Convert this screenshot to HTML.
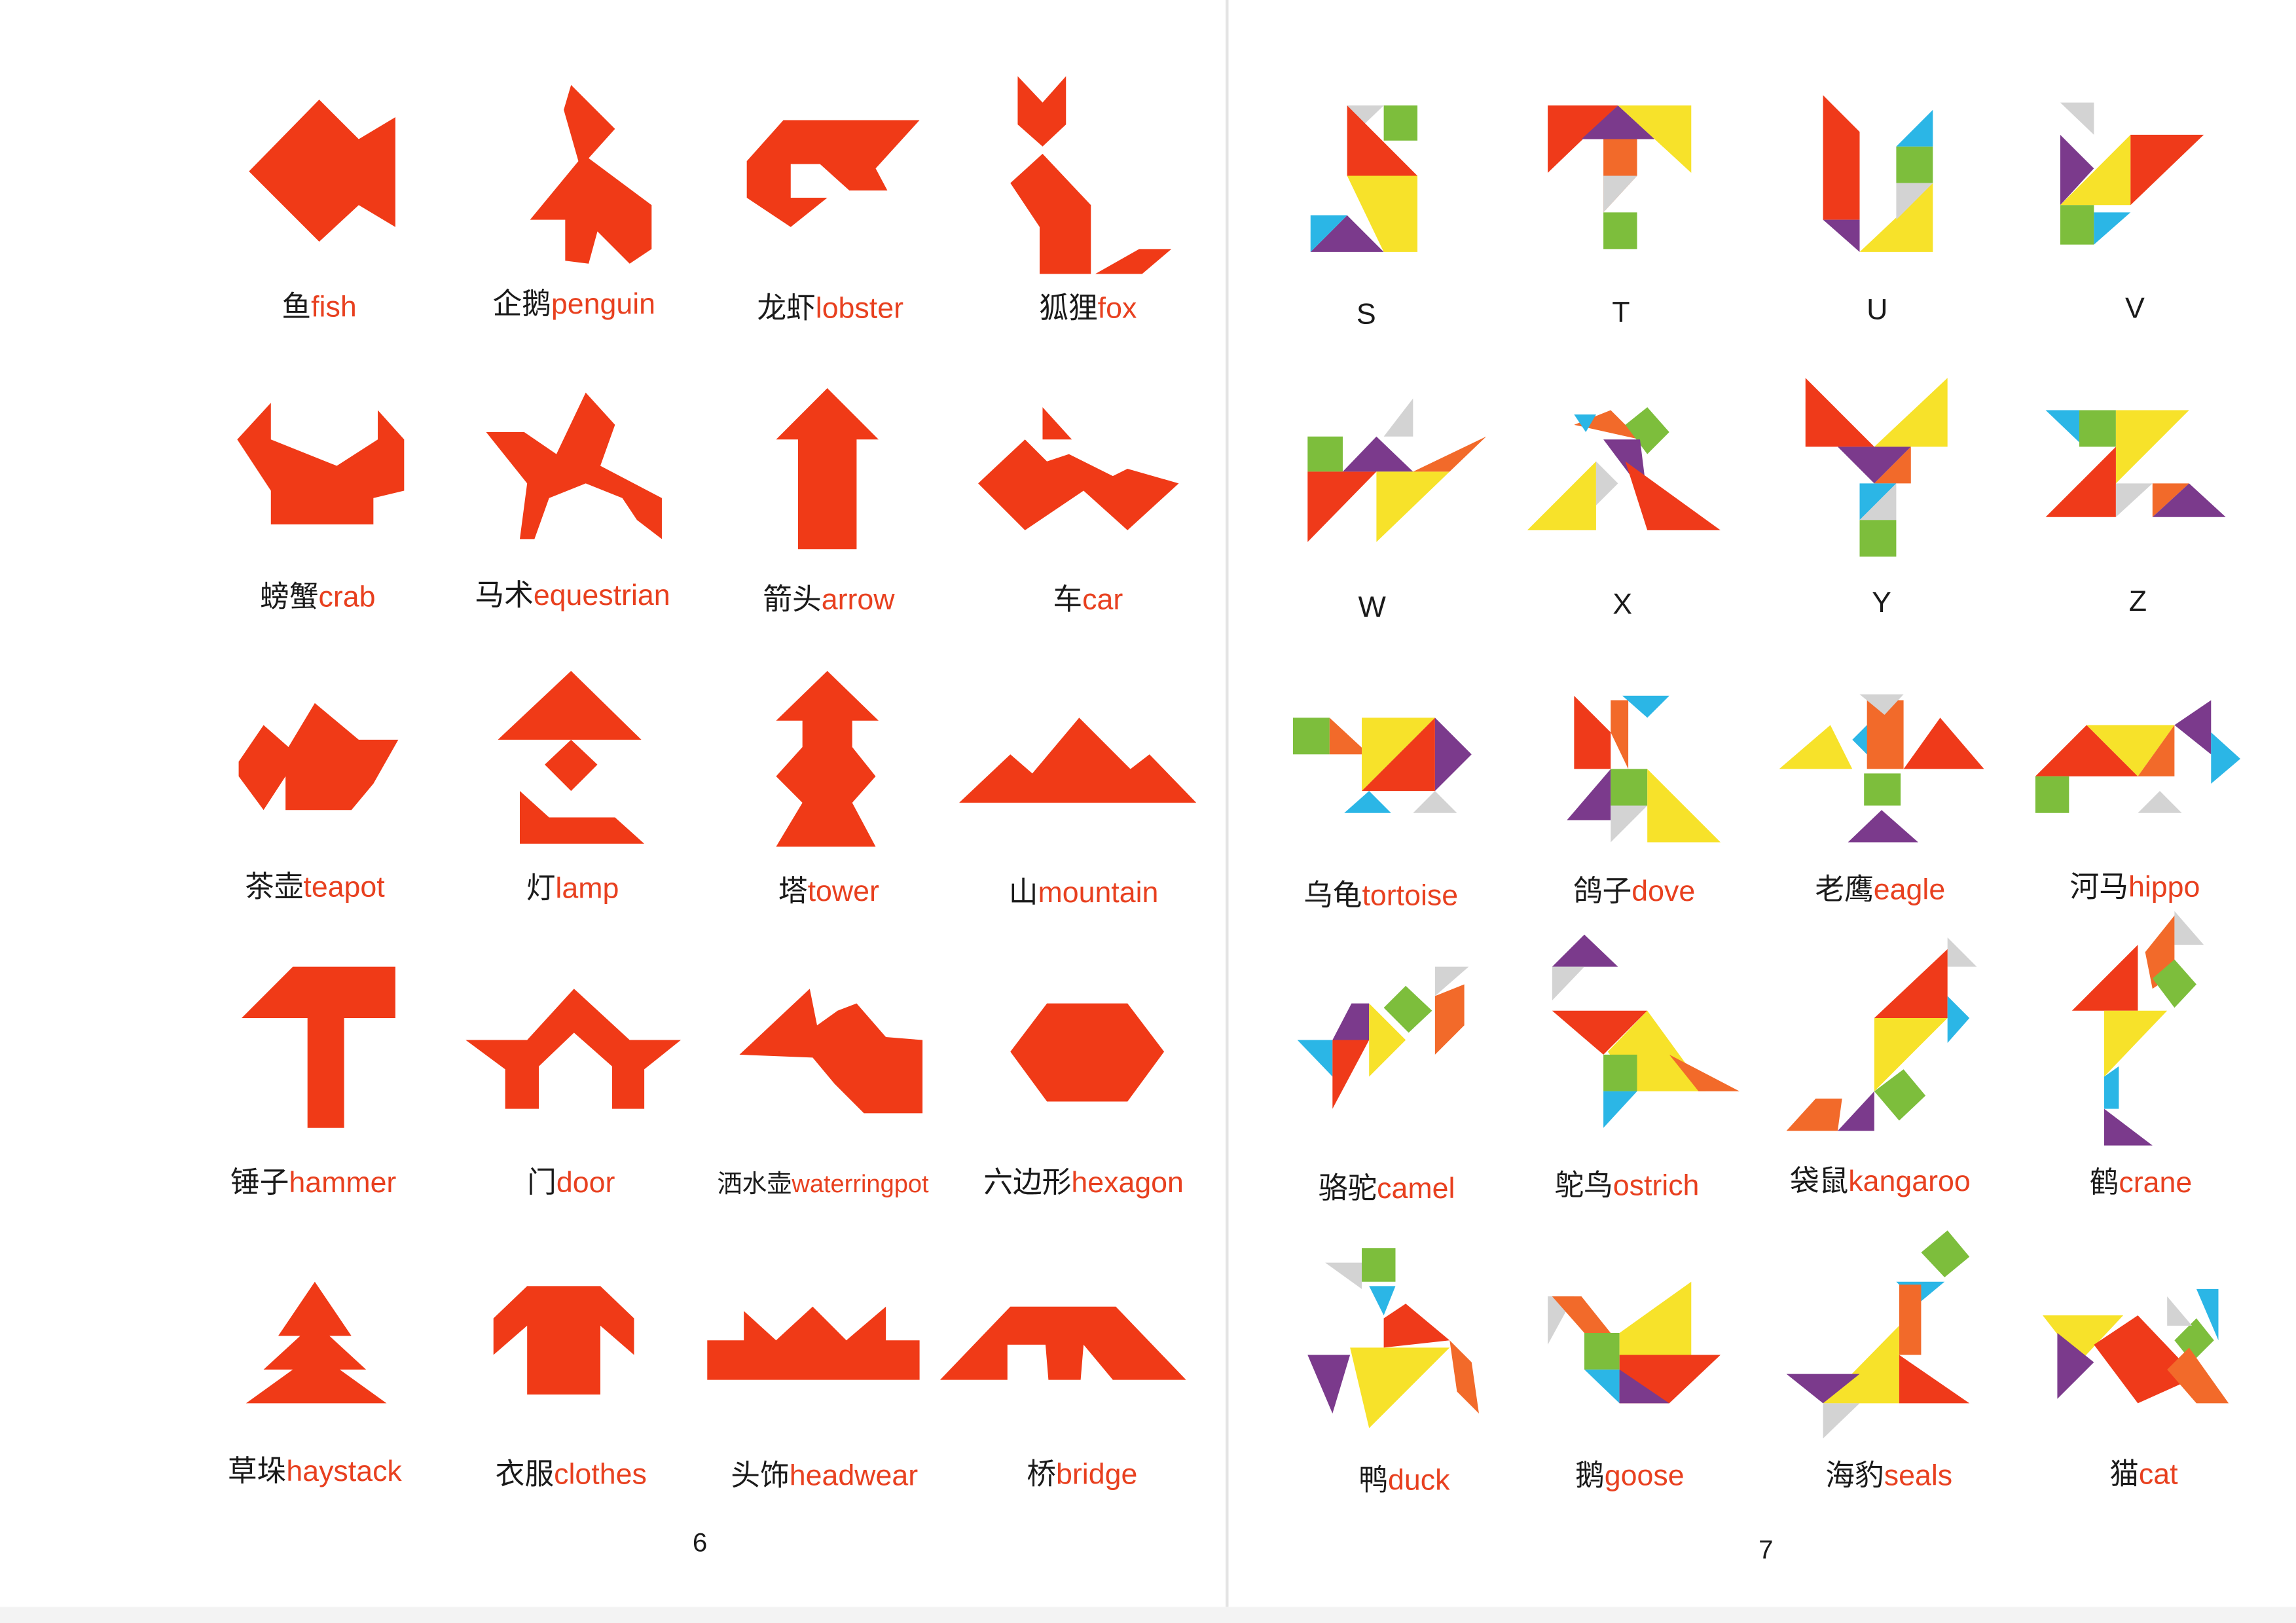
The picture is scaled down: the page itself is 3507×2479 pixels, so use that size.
<!DOCTYPE html>
<html><head><meta charset="utf-8">
<style>
html,body{margin:0;padding:0;background:#fff;}
svg{display:block;width:3507px;height:2479px;}
text{font-family:"Liberation Sans","Noto Sans CJK SC",sans-serif;font-size:20px;}
.r{fill:#ef3a16;}
.e{fill:#e8401f;}
.c{fill:#1a1a1a;}
</style></head><body>
<svg viewBox="0 0 1568 1108" preserveAspectRatio="none" xmlns="http://www.w3.org/2000/svg">
<rect x="0" y="0" width="1568" height="1108" fill="#fff"/>
<rect x="0" y="1097" width="1568" height="11" fill="#f3f3f3"/>
<line x1="838" y1="0" x2="838" y2="1097" stroke="#e4e4e4" stroke-width="2"/>

<!-- LEFT PAGE red shapes -->
<g fill="#f03a17">
<polygon points="170,117 218,68 245,95 270,80 270,155 245,140 218,165"/>
<polygon points="390,58 420,88 402,108 445,140 445,170 430,180 408,158 402,180 386,178 386,150 362,150 395,110 385,75"/>
<polygon points="510,110 535,82 628,82 598,115 606,130 580,130 560,112 540,112 540,135 565,135 540,155 510,135"/>
<polygon points="695,52 712,70 728,52 728,85 712,100 695,85"/>
<polygon points="690,125 712,105 745,140 745,187 710,187 710,155"/>
<polygon points="748,187 778,170 800,170 780,187"/>
<polygon points="162,300 185,275 185,300 230,318 258,300 258,280 276,300 276,335 255,340 255,358 185,358 185,335"/>
<polygon points="332,295 358,295 380,310 400,268 420,290 410,318 452,340 452,368 435,355 425,340 400,330 375,340 365,368 355,368 360,330"/>
<polygon points="530,300 565,265 600,300 585,300 585,375 545,375 545,300"/>
<polygon points="668,330 700,300 715,315 730,310 760,325 770,320 805,330 770,362 740,335 700,362"/>
<polygon points="712,278 732,300 712,300"/>
<polygon points="163,520 180,495 197,510 215,480 245,505 272,505 255,535 240,553 195,553 195,530 180,553 163,530"/>
<polygon points="340,505 390,458 438,505"/>
<polygon points="372,522 390,505 408,522 390,540"/>
<polygon points="355,540 375,558 420,558 440,576 355,576"/>
<polygon points="530,492 565,458 600,492 582,492 582,510 598,530 582,548 598,578 530,578 548,548 530,530 548,510 548,492"/>
<polygon points="655,548 690,515 705,528 737,490 772,525 785,515 817,548"/>
<polygon points="165,695 200,660 270,660 270,695 235,695 235,770 210,770 210,695"/>
<polygon points="318,710 360,710 392,675 430,710 465,710 440,730 440,757 418,757 418,728 392,705 368,728 368,757 345,757 345,730"/>
<polygon points="505,720 553,675 558,700 572,690 585,685 605,708 630,710 630,760 590,760 570,740 555,722"/>
<polygon points="690,718 715,685 770,685 795,718 770,752 715,752"/>
<polygon points="168,958 200,935 180,935 205,912 190,912 215,875 240,912 225,912 250,935 232,935 264,958"/>
<polygon points="337,900 360,878 410,878 433,900 433,925 410,905 410,952 360,952 360,905 337,925"/>
<polygon points="483,942 483,915 508,915 508,895 530,915 555,892 578,915 605,892 605,915 628,915 628,942"/>
<polygon points="642,942 690,892 762,892 810,942 760,942 740,918 738,942 716,942 714,918 688,918 688,942"/>
</g>

<!-- RIGHT PAGE colored tangrams -->
<!-- S -->
<polygon points="945,72 968,72 968,96 945,96" fill="#7dbe3c"/>
<polygon points="920,72 945,72 920,96" fill="#d3d3d3"/>
<polygon points="920,72 920,120 968,120" fill="#ef3a1a"/>
<polygon points="920,120 968,120 968,172 945,172" fill="#f7e22a"/>
<polygon points="895,172 945,172 920,147" fill="#7b3a8c"/>
<polygon points="895,147 920,147 895,172" fill="#2bb6e6"/>
<!-- T -->
<polygon points="1057,72 1105,72 1057,118" fill="#ef3a1a"/>
<polygon points="1080,95 1105,72 1130,95" fill="#7b3a8c"/>
<polygon points="1105,72 1155,72 1155,118" fill="#f7e22a"/>
<polygon points="1095,95 1118,95 1118,120 1095,145" fill="#f26a2a"/>
<polygon points="1095,120 1118,120 1095,145" fill="#d3d3d3"/>
<polygon points="1095,145 1118,145 1118,170 1095,170" fill="#7dbe3c"/>
<!-- U -->
<polygon points="1245,65 1270,90 1270,150 1245,150" fill="#ef3a1a"/>
<polygon points="1245,150 1270,150 1270,172" fill="#7b3a8c"/>
<polygon points="1270,172 1320,125 1320,172" fill="#f7e22a"/>
<polygon points="1295,100 1320,100 1320,125 1295,125" fill="#7dbe3c"/>
<polygon points="1295,100 1320,75 1320,100" fill="#2bb6e6"/>
<polygon points="1295,125 1320,125 1295,150" fill="#d3d3d3"/>
<!-- V -->
<polygon points="1407,70 1430,70 1430,92" fill="#d3d3d3"/>
<polygon points="1407,92 1430,115 1407,140" fill="#7b3a8c"/>
<polygon points="1407,140 1455,92 1455,140" fill="#f7e22a"/>
<polygon points="1455,92 1505,92 1455,140" fill="#ef3a1a"/>
<polygon points="1407,140 1430,140 1430,167 1407,167" fill="#7dbe3c"/>
<polygon points="1430,145 1455,145 1430,167" fill="#2bb6e6"/>
<!-- W -->
<polygon points="893,298 917,298 917,322 893,322" fill="#7dbe3c"/>
<polygon points="893,322 940,322 893,370" fill="#ef3a1a"/>
<polygon points="917,322 940,298 965,322" fill="#7b3a8c"/>
<polygon points="940,322 990,322 940,370" fill="#f7e22a"/>
<polygon points="965,322 1015,298 990,322" fill="#f26a2a"/>
<polygon points="945,298 965,272 965,298" fill="#d3d3d3"/>
<!-- X -->
<polygon points="1075,290 1100,280 1120,300" fill="#f26a2a"/>
<polygon points="1110,290 1125,278 1140,295 1125,310" fill="#7dbe3c"/>
<polygon points="1095,300 1120,300 1125,340" fill="#7b3a8c"/>
<polygon points="1043,362 1090,315 1090,362" fill="#f7e22a"/>
<polygon points="1110,315 1175,362 1125,362" fill="#ef3a1a"/>
<polygon points="1090,315 1105,330 1090,345" fill="#d3d3d3"/>
<polygon points="1075,283 1090,283 1083,295" fill="#2bb6e6"/>
<!-- Y -->
<polygon points="1233,258 1280,305 1233,305" fill="#ef3a1a"/>
<polygon points="1280,305 1330,258 1330,305" fill="#f7e22a"/>
<polygon points="1255,305 1305,305 1280,330" fill="#7b3a8c"/>
<polygon points="1280,330 1305,305 1305,330" fill="#f26a2a"/>
<polygon points="1270,330 1295,330 1270,355" fill="#2bb6e6"/>
<polygon points="1270,355 1295,355 1295,330" fill="#d3d3d3"/>
<polygon points="1270,355 1295,355 1295,380 1270,380" fill="#7dbe3c"/>
<!-- Z -->
<polygon points="1397,280 1420,280 1420,302" fill="#2bb6e6"/>
<polygon points="1420,280 1445,280 1445,305 1420,305" fill="#7dbe3c"/>
<polygon points="1445,280 1495,280 1445,330" fill="#f7e22a"/>
<polygon points="1397,353 1445,305 1445,353" fill="#ef3a1a"/>
<polygon points="1445,330 1470,330 1445,353" fill="#d3d3d3"/>
<polygon points="1470,330 1495,330 1470,353" fill="#f26a2a"/>
<polygon points="1495,330 1520,353 1470,353" fill="#7b3a8c"/>
<!-- tortoise -->
<polygon points="883,490 908,490 908,515 883,515" fill="#7dbe3c"/>
<polygon points="908,490 935,515 908,515" fill="#f26a2a"/>
<polygon points="930,490 980,490 930,540" fill="#f7e22a"/>
<polygon points="930,540 980,490 980,540" fill="#ef3a1a"/>
<polygon points="980,490 1005,515 980,540" fill="#7b3a8c"/>
<polygon points="918,555 935,540 950,555" fill="#2bb6e6"/>
<polygon points="965,555 980,540 995,555" fill="#d3d3d3"/>
<!-- dove -->
<polygon points="1075,475 1100,500 1100,525 1075,525" fill="#ef3a1a"/>
<polygon points="1100,478 1112,478 1112,525 1100,500" fill="#f26a2a"/>
<polygon points="1108,475 1140,475 1125,490" fill="#2bb6e6"/>
<polygon points="1070,560 1100,525 1100,560" fill="#7b3a8c"/>
<polygon points="1100,525 1125,525 1125,550 1100,550" fill="#7dbe3c"/>
<polygon points="1125,525 1175,575 1125,575" fill="#f7e22a"/>
<polygon points="1100,550 1125,550 1100,575" fill="#d3d3d3"/>
<!-- eagle -->
<polygon points="1215,525 1250,495 1265,525" fill="#f7e22a"/>
<polygon points="1265,505 1280,490 1290,505 1275,515" fill="#2bb6e6"/>
<polygon points="1275,478 1300,478 1300,525 1275,525" fill="#f26a2a"/>
<polygon points="1300,525 1325,490 1355,525" fill="#ef3a1a"/>
<polygon points="1273,528 1298,528 1298,550 1273,550" fill="#7dbe3c"/>
<polygon points="1262,575 1285,553 1310,575" fill="#7b3a8c"/>
<polygon points="1270,474 1300,474 1287,488" fill="#d3d3d3"/>
<!-- hippo -->
<polygon points="1390,530 1425,495 1460,530" fill="#ef3a1a"/>
<polygon points="1425,495 1485,495 1460,530" fill="#f7e22a"/>
<polygon points="1460,530 1485,495 1485,530" fill="#f26a2a"/>
<polygon points="1485,495 1510,478 1510,515" fill="#7b3a8c"/>
<polygon points="1510,500 1530,518 1510,535" fill="#2bb6e6"/>
<polygon points="1390,530 1413,530 1413,555 1390,555" fill="#7dbe3c"/>
<polygon points="1460,555 1475,540 1490,555" fill="#d3d3d3"/>
<!-- camel -->
<polygon points="886,710 910,710 910,735" fill="#2bb6e6"/>
<polygon points="910,710 935,710 910,757" fill="#ef3a1a"/>
<polygon points="910,710 923,685 935,685 935,710" fill="#7b3a8c"/>
<polygon points="935,685 960,710 935,735" fill="#f7e22a"/>
<polygon points="945,688 960,673 978,690 962,705" fill="#7dbe3c"/>
<polygon points="980,680 1000,672 1000,700 980,720" fill="#f26a2a"/>
<polygon points="980,660 1003,660 980,680" fill="#d3d3d3"/>
<!-- ostrich -->
<polygon points="1060,660 1082,638 1105,660" fill="#7b3a8c"/>
<polygon points="1060,660 1082,660 1060,683" fill="#d3d3d3"/>
<polygon points="1060,690 1125,690 1095,720" fill="#ef3a1a"/>
<polygon points="1098,718 1125,690 1165,745 1118,745" fill="#f7e22a"/>
<polygon points="1140,720 1188,745 1160,745" fill="#f26a2a"/>
<polygon points="1095,720 1118,720 1118,745 1095,745" fill="#7dbe3c"/>
<polygon points="1095,745 1118,745 1095,770" fill="#2bb6e6"/>
<!-- kangaroo -->
<polygon points="1330,640 1350,660 1330,660" fill="#d3d3d3"/>
<polygon points="1280,695 1330,648 1330,695" fill="#ef3a1a"/>
<polygon points="1330,680 1345,695 1330,712" fill="#2bb6e6"/>
<polygon points="1280,695 1330,695 1280,745" fill="#f7e22a"/>
<polygon points="1280,745 1300,730 1315,748 1297,765" fill="#7dbe3c"/>
<polygon points="1255,772 1280,745 1280,772" fill="#7b3a8c"/>
<polygon points="1220,772 1240,750 1258,750 1255,772" fill="#f26a2a"/>
<!-- crane -->
<polygon points="1485,622 1505,645 1485,645" fill="#d3d3d3"/>
<polygon points="1415,690 1460,645 1460,690" fill="#ef3a1a"/>
<polygon points="1465,650 1485,625 1485,665 1470,675" fill="#f26a2a"/>
<polygon points="1470,668 1485,655 1500,672 1485,688" fill="#7dbe3c"/>
<polygon points="1437,690 1480,690 1437,735" fill="#f7e22a"/>
<polygon points="1437,735 1447,728 1447,757 1437,757" fill="#2bb6e6"/>
<polygon points="1437,757 1470,782 1437,782" fill="#7b3a8c"/>
<!-- duck -->
<polygon points="905,862 930,862 930,880" fill="#d3d3d3"/>
<polygon points="930,852 953,852 953,875 930,875" fill="#7dbe3c"/>
<polygon points="935,878 953,878 945,898" fill="#2bb6e6"/>
<polygon points="945,900 960,890 990,915 945,920" fill="#ef3a1a"/>
<polygon points="922,920 990,920 935,975" fill="#f7e22a"/>
<polygon points="893,925 922,925 910,965" fill="#7b3a8c"/>
<polygon points="990,915 1005,930 1010,965 995,950" fill="#f26a2a"/>
<!-- goose -->
<polygon points="1057,885 1075,885 1057,918" fill="#d3d3d3"/>
<polygon points="1060,885 1080,885 1100,910 1082,910" fill="#f26a2a"/>
<polygon points="1082,910 1106,910 1106,935 1082,935" fill="#7dbe3c"/>
<polygon points="1082,935 1106,935 1106,958" fill="#2bb6e6"/>
<polygon points="1106,910 1155,875 1155,925 1106,925" fill="#f7e22a"/>
<polygon points="1106,925 1175,925 1140,958 1106,958" fill="#ef3a1a"/>
<polygon points="1106,958 1140,958 1106,935" fill="#7b3a8c"/>
<!-- seals -->
<polygon points="1312,855 1330,840 1345,858 1328,872" fill="#7dbe3c"/>
<polygon points="1295,875 1328,875 1310,890" fill="#2bb6e6"/>
<polygon points="1297,877 1312,877 1312,925 1297,925" fill="#f26a2a"/>
<polygon points="1245,958 1297,905 1297,958" fill="#f7e22a"/>
<polygon points="1297,925 1345,958 1297,958" fill="#ef3a1a"/>
<polygon points="1220,938 1270,938 1245,958" fill="#7b3a8c"/>
<polygon points="1245,958 1270,958 1245,982" fill="#d3d3d3"/>
<!-- cat -->
<polygon points="1395,898 1450,898 1420,930" fill="#f7e22a"/>
<polygon points="1430,918 1460,898 1500,940 1460,958" fill="#ef3a1a"/>
<polygon points="1405,955 1405,910 1430,930" fill="#7b3a8c"/>
<polygon points="1485,915 1500,900 1512,915 1497,930" fill="#7dbe3c"/>
<polygon points="1500,880 1515,880 1515,915" fill="#2bb6e6"/>
<polygon points="1480,885 1497,905 1480,905" fill="#d3d3d3"/>
<polygon points="1480,935 1495,920 1522,958 1500,958" fill="#f26a2a"/>

<!-- LABELS left -->
<g text-anchor="middle">
<text x="218" y="216"><tspan class="c">鱼</tspan><tspan class="e">fish</tspan></text>
<text x="392" y="214"><tspan class="c">企鹅</tspan><tspan class="e">penguin</tspan></text>
<text x="567" y="217"><tspan class="c">龙虾</tspan><tspan class="e">lobster</tspan></text>
<text x="743" y="217"><tspan class="c">狐狸</tspan><tspan class="e">fox</tspan></text>
<text x="217" y="414"><tspan class="c">螃蟹</tspan><tspan class="e">crab</tspan></text>
<text x="391" y="413"><tspan class="c">马术</tspan><tspan class="e">equestrian</tspan></text>
<text x="566" y="416"><tspan class="c">箭头</tspan><tspan class="e">arrow</tspan></text>
<text x="743" y="416"><tspan class="c">车</tspan><tspan class="e">car</tspan></text>
<text x="215" y="612"><tspan class="c">茶壶</tspan><tspan class="e">teapot</tspan></text>
<text x="391" y="613"><tspan class="c">灯</tspan><tspan class="e">lamp</tspan></text>
<text x="566" y="615"><tspan class="c">塔</tspan><tspan class="e">tower</tspan></text>
<text x="740" y="616"><tspan class="c">山</tspan><tspan class="e">mountain</tspan></text>
<text x="214" y="814"><tspan class="c">锤子</tspan><tspan class="e">hammer</tspan></text>
<text x="390" y="814"><tspan class="c">门</tspan><tspan class="e">door</tspan></text>
<text x="562" y="814" style="font-size:17px"><tspan class="c">洒水壶</tspan><tspan class="e">waterringpot</tspan></text>
<text x="740" y="814"><tspan class="c">六边形</tspan><tspan class="e">hexagon</tspan></text>
<text x="215" y="1011"><tspan class="c">草垛</tspan><tspan class="e">haystack</tspan></text>
<text x="390" y="1013"><tspan class="c">衣服</tspan><tspan class="e">clothes</tspan></text>
<text x="563" y="1014"><tspan class="c">头饰</tspan><tspan class="e">headwear</tspan></text>
<text x="739" y="1013"><tspan class="c">桥</tspan><tspan class="e">bridge</tspan></text>
<text x="478" y="1059" class="c" style="font-size:18px">6</text>

<!-- right labels -->
<text x="933" y="221" class="c">S</text>
<text x="1107" y="220" class="c">T</text>
<text x="1282" y="218" class="c">U</text>
<text x="1458" y="217" class="c">V</text>
<text x="937" y="421" class="c">W</text>
<text x="1108" y="419" class="c">X</text>
<text x="1285" y="418" class="c">Y</text>
<text x="1460" y="417" class="c">Z</text>
<text x="943" y="618"><tspan class="c">乌龟</tspan><tspan class="e">tortoise</tspan></text>
<text x="1116" y="615"><tspan class="c">鸽子</tspan><tspan class="e">dove</tspan></text>
<text x="1284" y="614"><tspan class="c">老鹰</tspan><tspan class="e">eagle</tspan></text>
<text x="1458" y="612"><tspan class="c">河马</tspan><tspan class="e">hippo</tspan></text>
<text x="947" y="818"><tspan class="c">骆驼</tspan><tspan class="e">camel</tspan></text>
<text x="1111" y="816"><tspan class="c">鸵鸟</tspan><tspan class="e">ostrich</tspan></text>
<text x="1284" y="813"><tspan class="c">袋鼠</tspan><tspan class="e">kangaroo</tspan></text>
<text x="1462" y="814"><tspan class="c">鹤</tspan><tspan class="e">crane</tspan></text>
<text x="959" y="1017"><tspan class="c">鸭</tspan><tspan class="e">duck</tspan></text>
<text x="1113" y="1014"><tspan class="c">鹅</tspan><tspan class="e">goose</tspan></text>
<text x="1290" y="1014"><tspan class="c">海豹</tspan><tspan class="e">seals</tspan></text>
<text x="1464" y="1013"><tspan class="c">猫</tspan><tspan class="e">cat</tspan></text>
<text x="1206" y="1064" class="c" style="font-size:18px">7</text>
</g>
</svg>
</body></html>
